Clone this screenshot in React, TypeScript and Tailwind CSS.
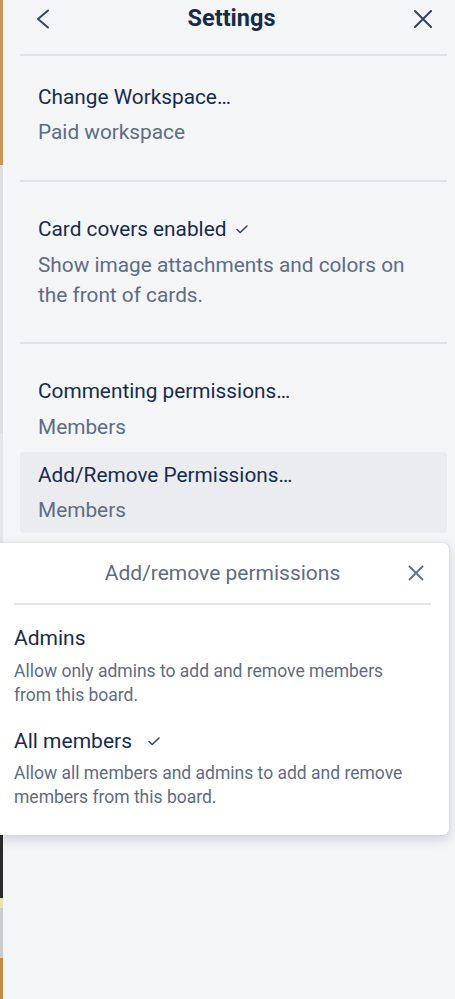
import React from "react";

const font = { fontFamily: "Roboto, 'Noto Sans', sans-serif" };

function Check({ className }: { className?: string }) {
  return (
    <svg viewBox="0 0 16 16" className={className} fill="none" stroke="currentColor" strokeWidth="1.6" strokeLinecap="round" strokeLinejoin="round">
      <path d="M3 8.5l3.2 3L13 5" />
    </svg>
  );
}

export default function App() {
  return (
    <div className="relative flex w-[455px] h-[999px] overflow-hidden bg-[#f4f5f7]" style={font}>
      {/* left strip of underlying page */}
      <div className="w-[3px] flex flex-col shrink-0">
        <div className="h-[165px] bg-[#c8955a]" />
        <div className="h-[268px] bg-[#dcdee2]" />
        <div className="h-[400px] bg-[#e3e5e8]" />
        <div className="h-[65px] bg-[#2b2b2b]" />
        <div className="h-[10px] bg-[#e8e2b0]" />
        <div className="h-[50px] bg-[#c9cbcf]" />
        <div className="flex-1 bg-[#c38a45]" />
      </div>

      {/* settings panel */}
      <div className="flex-1 flex flex-col pl-[17px] pr-[8px] bg-[#f4f5f7]">
        {/* header */}
        <div className="h-[38px] flex items-center justify-between">
          <svg viewBox="0 0 14 20" className="w-[14px] h-[20px] ml-[16px] text-[#344563]" fill="none" stroke="currentColor" strokeWidth="2" strokeLinecap="round" strokeLinejoin="round">
            <path d="M12 1.5L2 10l10 8.5" />
          </svg>
          <div className="text-[23.5px] font-bold text-[#172b4d] leading-none">Settings</div>
          <svg viewBox="0 0 20 20" className="w-[20px] h-[20px] mr-[14px] text-[#344563]" fill="none" stroke="currentColor" strokeWidth="2.1" strokeLinecap="round">
            <path d="M2 2l16 16M18 2L2 18" />
          </svg>
        </div>
        <div className="mt-[16px] h-[2px] bg-[#dfe1e6]" />

        {/* section 1 */}
        <div className="pt-[26px] pb-[33px] px-[18px]">
          <div className="text-[20.8px] leading-[30px] text-[#172b4d]">Change Workspace…</div>
          <div className="mt-[5px] text-[20.8px] leading-[30px] text-[#5e6c84]">Paid workspace</div>
        </div>
        <div className="h-[2px] bg-[#dfe1e6]" />

        {/* section 2 */}
        <div className="pt-[32px] pb-[32px] px-[18px]">
          <div className="flex items-center gap-[8px] text-[20.8px] leading-[30px] text-[#172b4d]">
            <span>Card covers enabled</span>
            <Check className="w-[16px] h-[16px] text-[#344563]" />
          </div>
          <div className="mt-[6px] text-[20.8px] leading-[30px] text-[#5e6c84]">
            Show image attachments and colors on the front of cards.
          </div>
        </div>
        <div className="h-[2px] bg-[#dfe1e6]" />

        {/* section 3 */}
        <div className="pt-[32px]">
          <div className="px-[18px]">
            <div className="text-[20.8px] leading-[30px] text-[#172b4d]">Commenting permissions…</div>
            <div className="mt-[6px] text-[20.8px] leading-[30px] text-[#5e6c84]">Members</div>
          </div>
          <div className="mt-[10px] rounded-[4px] bg-[#ebecf0] px-[18px] pt-[8px] pb-[8px]">
            <div className="text-[20.8px] leading-[30px] text-[#172b4d]">Add/Remove Permissions…</div>
            <div className="mt-[5px] text-[20.8px] leading-[30px] text-[#5e6c84]">Members</div>
          </div>
        </div>
      </div>

      {/* popup overlay */}
      <div className="absolute left-0 top-[543px] w-[449px] bg-white rounded-r-[6px] shadow-[0_4px_12px_rgba(9,30,66,0.18),0_0_1px_rgba(9,30,66,0.25)] pl-[14px] pr-[18px] pb-[26px]">
        <div className="relative h-[60px] flex items-center justify-center">
          <div className="text-[21px] text-[#5e6c84] leading-none">Add/remove permissions</div>
          <svg viewBox="0 0 16 16" className="absolute right-[7px] top-[22px] w-[16px] h-[16px] text-[#5e6c84]" fill="none" stroke="currentColor" strokeWidth="1.8" strokeLinecap="round">
            <path d="M1.5 1.5l13 13M14.5 1.5l-13 13" />
          </svg>
        </div>
        <div className="h-[2px] bg-[#e4e6ea]" />
        <div className="mt-[19px] text-[21px] leading-[28px] text-[#172b4d]">Admins</div>
        <div className="mt-[7px] max-w-[402px] text-[17.5px] leading-[24px] text-[#5e6c84]">
          Allow only admins to add and remove members from this board.
        </div>
        <div className="mt-[20px] flex items-center gap-[14px] text-[21px] leading-[28px] text-[#172b4d]">
          <span>All members</span>
          <Check className="w-[16px] h-[16px] text-[#344563]" />
        </div>
        <div className="mt-[6px] max-w-[402px] text-[17.5px] leading-[24px] text-[#5e6c84]">
          Allow all members and admins to add and remove members from this board.
        </div>
      </div>
    </div>
  );
}
